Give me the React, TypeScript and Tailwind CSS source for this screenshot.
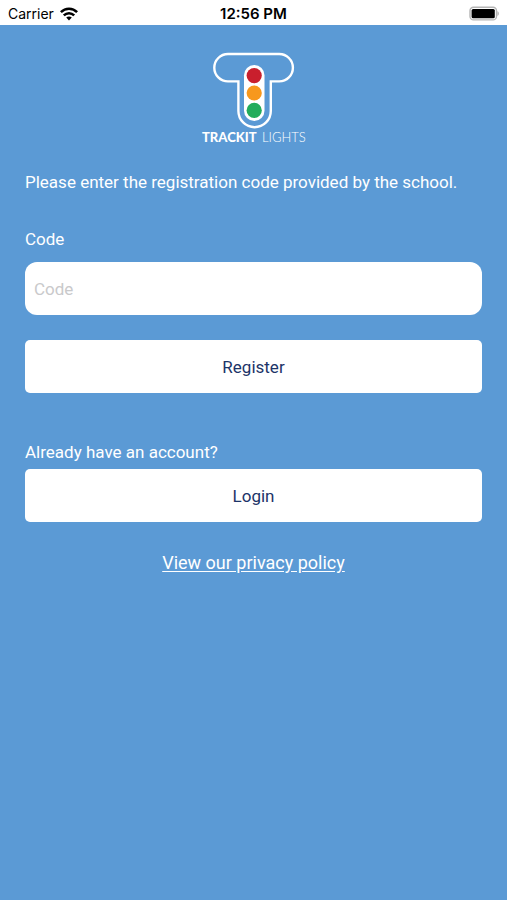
import React, { useState } from 'react';

const StatusBar: React.FC = () => (
  <header className="grid h-[25px] grid-cols-[1fr_auto_1fr] items-center bg-white px-2 pt-0.5 font-['Inter',sans-serif] text-sm leading-5 text-black">
    <div className="flex items-center gap-1.5">
      <span>Carrier</span>
      <svg viewBox="0 0 18 14" className="h-3.5 w-[18px]" fill="none" stroke="#000" strokeWidth="2.5">
        <path d="M0.9 5.2C5.4 0.6 12.6 0.6 17.1 5.2" />
        <path d="M3.8 8.4C6.8 5.5 11.2 5.5 14.2 8.4" />
        <path d="M6.2 10.6C7.8 9.2 10.2 9.2 11.8 10.6L9 13.6Z" fill="#000" stroke="none" />
      </svg>
    </div>
    <span className="text-center text-[15px] font-semibold">12:56 PM</span>
    <svg viewBox="0 0 30 16" className="h-4 w-[30px] justify-self-end">
      <rect x="1" y="1.3" width="26.5" height="12.6" rx="3.5" fill="#fff" stroke="#b5b5b5" strokeWidth="1.4" />
      <rect x="2.6" y="3" width="23.2" height="9.2" rx="1.5" fill="#000" />
      <path d="M28.4 5.3C30.4 6 30.4 9.2 28.4 9.9Z" fill="#b5b5b5" />
    </svg>
  </header>
);

const Logo: React.FC = () => (
  <svg viewBox="0 0 106 94" className="h-[94px] w-[106px]" role="img" aria-label="Trackit Lights">
    <path
      d="M27 3H78.2A13.7 13.7 0 0 1 78.2 30.4H69.8V60A16.2 16.2 0 0 1 37.4 60V30.4H27A13.7 13.7 0 0 1 27 3Z"
      fill="none"
      stroke="#fff"
      strokeWidth="2.4"
    />
    <rect x="43" y="14" width="20.5" height="56" rx="10.2" fill="#fff" />
    <circle cx="53.2" cy="24.6" r="7.6" fill="#c91f2d" />
    <circle cx="53.2" cy="42" r="7.6" fill="#f7981d" />
    <circle cx="53.2" cy="59.4" r="7.6" fill="#23ac5b" />
    <g fill="#fff" fontFamily="Lato, sans-serif" fontSize="13">
      <text x="1" y="91" fontWeight="900">
        TRACKIT
      </text>
      <text x="61" y="91" fontWeight="300">
        LIGHTS
      </text>
    </g>
  </svg>
);

const buttonClass = 'h-[53px] w-full rounded-[5px] bg-white text-[17px] text-[#1c3468]';

export default function App() {
  const [code, setCode] = useState('');

  return (
    <div className="flex min-h-screen flex-col bg-[#5b9ad5] font-['Roboto',sans-serif] text-[17px] leading-6 text-white">
      <StatusBar />
      <main className="flex flex-col px-[25px] pt-[26px]">
        <div className="flex justify-center">
          <Logo />
        </div>

        <form className="mt-[25px] flex flex-col" onSubmit={(e) => e.preventDefault()}>
          <p>Please enter the registration code provided by the school.</p>
          <label htmlFor="code" className="mt-[33px]">
            Code
          </label>
          <input
            id="code"
            type="text"
            placeholder="Code"
            value={code}
            onChange={(e) => setCode(e.target.value)}
            className="mt-[11px] h-[53px] w-full rounded-xl bg-white px-[9px] text-black outline-none placeholder:text-[#c9c9cb]"
          />
          <button type="submit" className={`mt-[25px] ${buttonClass}`}>
            Register
          </button>
        </form>

        <p className="mt-[47px]">Already have an account?</p>
        <button type="button" className={`mt-[5px] ${buttonClass}`}>
          Login
        </button>

        <a href="#privacy" className="mt-[29px] self-center text-lg leading-6 underline underline-offset-2">
          View our privacy policy
        </a>
      </main>
    </div>
  );
}
